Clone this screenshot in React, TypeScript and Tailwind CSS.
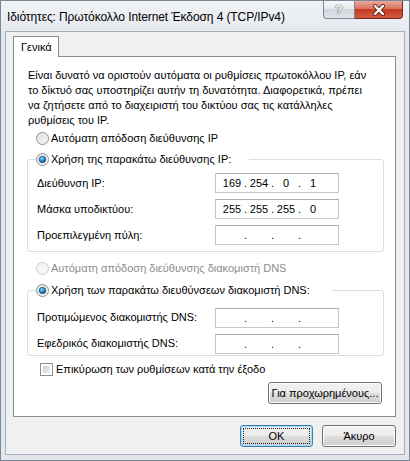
import React from 'react';

const font = "font-['Liberation_Sans','DejaVu_Sans',sans-serif]";

const Radio = ({ checked = false, disabled = false }: { checked?: boolean; disabled?: boolean }) => (
  <svg width="13" height="13" viewBox="0 0 13 13" className="shrink-0">
    <defs>
      <linearGradient id={`rf${checked ? 1 : 0}${disabled ? 1 : 0}`} x1="0" y1="0" x2="1" y2="1">
        <stop offset="0" stopColor={disabled ? '#f2f2f2' : '#d4d4d4'} />
        <stop offset="1" stopColor={disabled ? '#fbfbfb' : '#ffffff'} />
      </linearGradient>
      <radialGradient id="rdot" cx="0.4" cy="0.35" r="0.7">
        <stop offset="0" stopColor="#8fe0ff" />
        <stop offset="0.5" stopColor="#2b8ed1" />
        <stop offset="1" stopColor="#0f3a66" />
      </radialGradient>
    </defs>
    <circle cx="6.5" cy="6.5" r="6" fill={`url(#rf${checked ? 1 : 0}${disabled ? 1 : 0})`} stroke={disabled ? '#c9c9c9' : '#8e8f8f'} strokeWidth="1" />
    <circle cx="6.5" cy="6.5" r="4.6" fill="none" stroke={disabled ? '#f4f4f4' : '#f0f0f0'} strokeWidth="0.8" />
    {checked && <circle cx="6.5" cy="6.5" r="3.3" fill="url(#rdot)" stroke="#1c4d7a" strokeWidth="0.6" />}
  </svg>
);

const IpBox = ({ parts }: { parts: string[] }) => (
  <div className="flex items-center w-[124px] h-[20px] border border-[#c3c6cc] border-t-[#abadb3] bg-white pl-[5px] text-black">
    {parts.map((p, i) => (
      <React.Fragment key={i}>
        <span className="w-[22px] text-center leading-none">{p}</span>
        {i < 3 && <span className="w-[5px] text-center leading-none">.</span>}
      </React.Fragment>
    ))}
  </div>
);

const WinButton = ({ label, width, isDefault = false }: { label: string; width: string; isDefault?: boolean }) => (
  <div
    className={`${width} h-[22px] rounded-[3px] border ${
      isDefault
        ? 'border-[#3c7fb1] shadow-[inset_0_0_0_1px_#9fdcf7]'
        : 'border-[#707070] shadow-[inset_0_0_0_1px_#fcfcfc]'
    } bg-[linear-gradient(#f2f2f2_0%,#ebebeb_50%,#dddddd_50%,#cfcfcf_100%)] flex items-center justify-center p-[2px] whitespace-nowrap`}
  >
    <div
      className={`w-full h-full flex items-center justify-center ${
        isDefault ? 'border border-dotted border-[#222]' : ''
      }`}
    >
      {label}
    </div>
  </div>
);

export default function App() {
  return (
    <div className={`w-[410px] h-[461px] bg-[linear-gradient(#f1f3f6,#e2e6eb_40px,#e3e7ec)] border border-[#7a8797] flex flex-col text-[11px] text-black ${font}`}>
      {/* title bar */}
      <div className="h-[30px] flex items-start shrink-0">
        <div className="pl-[6px] pt-[7px] text-[12px] tracking-[-0.1px] text-black whitespace-nowrap">
          Ιδιότητες: Πρωτόκολλο Internet Έκδοση 4 (TCP/IPv4)
        </div>
        <div className="ml-auto mr-[6px] flex">
          <div className="w-[32px] h-[18px] border border-t-0 border-[#7d8896] rounded-bl-[4px] bg-[linear-gradient(#f6f8fa,#e3e8ee_50%,#cfd6de_50%,#dfe5eb)] flex items-center justify-center">
            <span className="font-bold text-[13px] text-white leading-none [text-shadow:0_0_1px_#3a3a3a,0_0_1px_#3a3a3a]">?</span>
          </div>
          <div className="w-[48px] h-[18px] border border-t-0 border-l-0 border-[#6e2a22] rounded-br-[4px] bg-[linear-gradient(#e9a99a,#d8735f_45%,#c43c24_50%,#d35a3f)] flex items-center justify-center">
            <svg width="14" height="12" viewBox="0 0 14 12">
              <path d="M3 2 L11 10 M11 2 L3 10" stroke="#5a2018" strokeWidth="4" strokeLinecap="round" />
              <path d="M3 2 L11 10 M11 2 L3 10" stroke="#ffffff" strokeWidth="2.4" strokeLinecap="round" />
            </svg>
          </div>
        </div>
      </div>

      {/* client */}
      <div className="mx-[4px] border border-[#a6b0bc] bg-[#f0f0f0] flex flex-col pt-[4px] pl-[7px] pr-[8px] pb-[7px]">
        {/* tab header */}
        <div className="flex">
          <div className="w-[46px] h-[21px] -mb-[1px] border border-b-0 border-[#898c95] bg-white flex items-center pl-[7px] z-10">
            Γενικά
          </div>
        </div>

        {/* tab panel */}
        <div className="border border-[#898c95] bg-white flex flex-col pt-[11px] pb-[12px]">
          <p className="ml-[14px] leading-[15px] whitespace-nowrap">
            Είναι δυνατό να οριστούν αυτόματα οι ρυθμίσεις πρωτοκόλλου IP, εάν
            <br />
            το δίκτυό σας υποστηρίζει αυτήν τη δυνατότητα. Διαφορετικά, πρέπει
            <br />
            να ζητήσετε από το διαχειριστή του δικτύου σας τις κατάλληλες
            <br />
            ρυθμίσεις του IP.
          </p>

          <div className="ml-[22px] mt-[2px] h-[16px] flex items-center gap-[2px]">
            <Radio />
            <span>Αυτόματη απόδοση διεύθυνσης IP</span>
          </div>

          <fieldset className="ml-[13px] mt-[5px] w-[357px] border border-[#d5dfe5] rounded-[3px] pb-[6px]">
            <legend className="ml-[8px] w-[213px] h-[16px] flex items-center gap-[2px] bg-white whitespace-nowrap">
              <Radio checked />
              <span>Χρήση της παρακάτω διεύθυνσης IP:</span>
            </legend>
            <div className="flex flex-col gap-[6px] pt-[6px]">
              {[
                ['Διεύθυνση IP:', ['169', '254', '0', '1']],
                ['Μάσκα υποδικτύου:', ['255', '255', '255', '0']],
                ['Προεπιλεγμένη πύλη:', ['', '', '', '']],
              ].map(([label, parts]) => (
                <div key={label as string} className="flex items-center pl-[9px] pr-[44px]">
                  <span className="flex-1">{label as string}</span>
                  <IpBox parts={parts as string[]} />
                </div>
              ))}
            </div>
          </fieldset>

          <div className="ml-[22px] mt-[8px] h-[16px] flex items-center gap-[2px] text-[#8d8d8d]">
            <Radio disabled />
            <span>Αυτόματη απόδοση διεύθυνσης διακομιστή DNS</span>
          </div>

          <fieldset className="ml-[13px] mt-[6px] w-[357px] border border-[#d5dfe5] rounded-[3px] pb-[1px]">
            <legend className="ml-[8px] w-[296px] h-[16px] flex items-center gap-[2px] bg-white whitespace-nowrap">
              <Radio checked />
              <span>Χρήση των παρακάτω διευθύνσεων διακομιστή DNS:</span>
            </legend>
            <div className="flex flex-col gap-[6px] pt-[10px]">
              {['Προτιμώμενος διακομιστής DNS:', 'Εφεδρικός διακομιστής DNS:'].map((label) => (
                <div key={label} className="flex items-start pl-[9px] pr-[44px]">
                  <span className="flex-1 pt-[1px]">{label}</span>
                  <IpBox parts={['', '', '', '']} />
                </div>
              ))}
            </div>
          </fieldset>

          <div className="ml-[26px] mt-[5px] h-[16px] flex items-center gap-[3px]">
            <div className="w-[13px] h-[13px] border border-[#8e8f8f] bg-white p-[2px] shrink-0">
              <div className="w-full h-full bg-[linear-gradient(135deg,#c9ccd1,#f4f4f4)]" />
            </div>
            <span>Επικύρωση των ρυθμίσεων κατά την έξοδο</span>
          </div>

          <div className="flex justify-end mr-[13px] mt-[5px]">
            <WinButton label="Για προχωρημένους..." width="w-[114px]" />
          </div>
        </div>

        {/* bottom buttons */}
        <div className="flex justify-end gap-[9px] mt-[8px]">
          <WinButton label="OK" width="w-[73px]" isDefault />
          <WinButton label="Άκυρο" width="w-[74px]" />
        </div>
      </div>
    </div>
  );
}
